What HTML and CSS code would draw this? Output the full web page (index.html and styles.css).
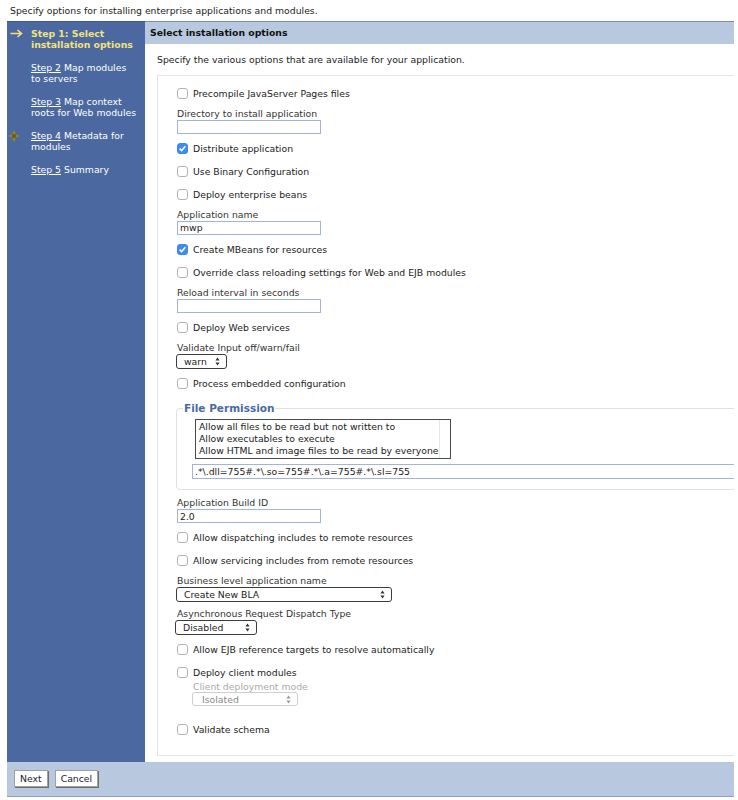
FILE: index.html
```html
<!DOCTYPE html>
<html lang="en">

<head>
    <meta charset="UTF-8">
    <meta name="viewport" content="width=device-width, initial-scale=1.0">
    <title>Install New Application</title>
    <link rel="stylesheet" href="styles.css">
</head>

<body>
    <p class="intro">Specify options for installing enterprise applications and modules.</p>

    <div class="wizard">
        <div class="wizard-body">
            <ul class="steps">
                <li class="step current">
                    <span class="step-icon">
                        <svg width="13" height="9" viewBox="0 0 13 9"><path d="M0.5 4.5H11M7.5 1L11.5 4.5L7.5 8" fill="none" stroke="#f3e27b" stroke-width="1.6"/></svg>
                    </span>
                    <span class="step-text">Step 1: Select<br>installation options</span>
                </li>
                <li class="step">
                    <span class="step-icon"></span>
                    <span class="step-text"><a href="#">Step 2</a> Map modules<br>to servers</span>
                </li>
                <li class="step">
                    <span class="step-icon"></span>
                    <span class="step-text"><a href="#">Step 3</a> Map context<br>roots for Web modules</span>
                </li>
                <li class="step">
                    <span class="step-icon required">
                        <svg width="12" height="12" viewBox="0 0 12 12"><path d="M6 0L7.8 4.2L12 6L7.8 7.8L6 12L4.2 7.8L0 6L4.2 4.2Z" fill="#9a8626"/><circle cx="6" cy="6" r="2.2" fill="#6e5f14"/></svg>
                    </span>
                    <span class="step-text"><a href="#">Step 4</a> Metadata for<br>modules</span>
                </li>
                <li class="step">
                    <span class="step-icon"></span>
                    <span class="step-text"><a href="#">Step 5</a> Summary</span>
                </li>
            </ul>

            <div class="main">
                <div class="main-title">Select installation options</div>
                <p class="main-desc">Specify the various options that are available for your application.</p>

                <div class="options">
                    <div class="opt"><span class="cb"></span>Precompile JavaServer Pages files</div>
                    <div class="field">
                        <label>Directory to install application</label>
                        <input class="text" type="text" value="">
                    </div>
                    <div class="opt"><span class="cb on"><svg viewBox="0 0 11 11"><path d="M2.6 5.6L4.6 7.6L8.4 3.2" fill="none" stroke="#fff" stroke-width="1.5"/></svg></span>Distribute application</div>
                    <div class="opt"><span class="cb"></span>Use Binary Configuration</div>
                    <div class="opt"><span class="cb"></span>Deploy enterprise beans</div>
                    <div class="field">
                        <label>Application name</label>
                        <input class="text" type="text" value="mwp">
                    </div>
                    <div class="opt"><span class="cb on"><svg viewBox="0 0 11 11"><path d="M2.6 5.6L4.6 7.6L8.4 3.2" fill="none" stroke="#fff" stroke-width="1.5"/></svg></span>Create MBeans for resources</div>
                    <div class="opt"><span class="cb"></span>Override class reloading settings for Web and EJB modules</div>
                    <div class="field">
                        <label>Reload interval in seconds</label>
                        <input class="text" type="text" value="">
                    </div>
                    <div class="opt"><span class="cb"></span>Deploy Web services</div>
                    <div class="field">
                        <label>Validate Input off/warn/fail</label>
                        <span class="select select-validate">warn<svg width="5" height="9" viewBox="0 0 5 9"><path d="M2.5 0.5L4.6 3.4H0.4ZM2.5 8.5L4.6 5.6H0.4Z" fill="#333"/></svg></span>
                    </div>
                    <div class="opt"><span class="cb"></span>Process embedded configuration</div>

                    <fieldset class="permission">
                        <legend>File Permission</legend>
                        <div class="listbox">
                            <ul>
                                <li>Allow all files to be read but not written to</li>
                                <li>Allow executables to execute</li>
                                <li>Allow HTML and image files to be read by everyone</li>
                            </ul>
                            <span class="track"></span>
                        </div>
                        <input class="text text-wide" type="text" value=".*\.dll=755#.*\.so=755#.*\.a=755#.*\.sl=755">
                    </fieldset>

                    <div class="field">
                        <label>Application Build ID</label>
                        <input class="text" type="text" value="2.0">
                    </div>
                    <div class="opt"><span class="cb"></span>Allow dispatching includes to remote resources</div>
                    <div class="opt"><span class="cb"></span>Allow servicing includes from remote resources</div>
                    <div class="field">
                        <label>Business level application name</label>
                        <span class="select select-bla">Create New BLA<svg width="5" height="9" viewBox="0 0 5 9"><path d="M2.5 0.5L4.6 3.4H0.4ZM2.5 8.5L4.6 5.6H0.4Z" fill="#333"/></svg></span>
                    </div>
                    <div class="field">
                        <label>Asynchronous Request Dispatch Type</label>
                        <span class="select select-async">Disabled<svg width="5" height="9" viewBox="0 0 5 9"><path d="M2.5 0.5L4.6 3.4H0.4ZM2.5 8.5L4.6 5.6H0.4Z" fill="#333"/></svg></span>
                    </div>
                    <div class="opt"><span class="cb"></span>Allow EJB reference targets to resolve automatically</div>
                    <div class="opt"><span class="cb"></span>Deploy client modules</div>
                    <div class="subfield">
                        <label>Client deployment mode</label>
                        <span class="select select-client disabled">Isolated<svg width="5" height="9" viewBox="0 0 5 9"><path d="M2.5 0.5L4.6 3.4H0.4ZM2.5 8.5L4.6 5.6H0.4Z" fill="#999"/></svg></span>
                    </div>
                    <div class="opt"><span class="cb"></span>Validate schema</div>
                </div>
            </div>
        </div>

        <div class="wizard-footer">
            <button type="button">Next</button>
            <button type="button">Cancel</button>
        </div>
    </div>
</body>

</html>
```

FILE: styles.css
```css
body {
    margin: 0;
    font-family: "DejaVu Sans", Verdana, sans-serif;
    font-size: 9.3px;
    color: #222;
    background-color: #fff;
}

.intro {
    margin: 0;
    padding: 4px 0 4px 10px;
    line-height: 13px;
}

.wizard {
    margin-left: 7px;
    width: 727px;
    overflow: hidden;
}

.wizard-body {
    display: grid;
    grid-template-columns: 138px 1fr;
}

/* left step list */
.steps {
    list-style: none;
    margin: 0;
    padding: 5.5px 0 0;
    background-color: #4b69a0;
    border-top: 1px solid #3f5b8e;
}

.step {
    display: grid;
    grid-template-columns: 24px 1fr;
    line-height: 11px;
    margin-bottom: 12px;
    color: #fff;
}

.step-icon {
    padding-left: 3px;
}

.step-icon svg {
    display: block;
    margin-top: 1px;
}

.step-icon.required {
    padding-left: 1px;
}

.step-icon.required svg {
    margin-top: 0;
}

.step.current .step-text {
    color: #f3e27b;
    font-weight: bold;
}

.step a {
    color: #fff;
}

/* main panel */
.main {
    padding-bottom: 6px;
    min-width: 0;
}

.main-title {
    background-color: #b8c8df;
    border-top: 1px solid #7b8db6;
    padding: 0 5px;
    line-height: 22px;
    font-weight: bold;
    color: #111;
}

.main-desc {
    margin: 0;
    padding: 8.5px 12px 9.5px;
    line-height: 13px;
}

.options {
    margin: 0 -60px 0 12px;
    border: 1px solid #e4e4e4;
    padding: 5.5px 19px 14.5px;
}

.opt {
    display: flex;
    align-items: center;
    gap: 5px;
    height: 23px;
}

.cb {
    width: 11px;
    height: 11px;
    box-sizing: border-box;
    border: 1px solid #b3b3b3;
    border-radius: 3px;
    background-color: #fff;
    flex: none;
}

.cb.on {
    background-color: #3c8cf5;
    border-color: #3a87ee;
}

.cb svg {
    display: block;
    width: 11px;
    height: 11px;
    margin: -1px;
}

.field {
    padding: 3px 0;
}

.field label,
.subfield label {
    display: block;
    line-height: 12px;
    color: #333;
}

.text {
    display: block;
    box-sizing: border-box;
    width: 144px;
    height: 14px;
    margin: 0;
    padding: 0 2px;
    border: 1px solid #a2b5d2;
    font: inherit;
    line-height: 12px;
    color: #222;
}

.select {
    display: flex;
    align-items: center;
    justify-content: space-between;
    box-sizing: border-box;
    height: 15px;
    margin-left: -1px;
    padding: 0 6px 0 7px;
    border: 1px solid #3c3c3c;
    border-radius: 3px;
    background-color: #fff;
}

.select-validate {
    width: 51px;
}

.select-bla {
    width: 216px;
}

.select-async {
    width: 82px;
    margin-left: -2px;
}

.subfield {
    margin: -3px 0 11.5px 16px;
}

.subfield label {
    line-height: 11px;
    color: #aaa;
}

.select-client {
    width: 106px;
    height: 14px;
    padding-left: 9px;
}

.select.disabled {
    border-color: #cfcfcf;
    color: #888;
}

/* file permission group */
.permission {
    margin: 7.5px 0 4px -1px;
    padding: 0 0 10px 6px;
    border: 1px solid #e0e0e0;
    border-radius: 4px;
    min-width: 0;
}

.permission legend {
    padding: 0 1px;
    line-height: 12px;
    font-size: 10.5px;
    font-weight: bold;
    color: #4b6aa2;
}

.listbox {
    display: flex;
    box-sizing: border-box;
    width: 256px;
    height: 40px;
    margin: 5px 0 0 12px;
    border: 1px solid #4a4a4a;
}

.listbox ul {
    flex: 1;
    list-style: none;
    margin: 0;
    padding: 1px 0 1px 3px;
    line-height: 12px;
    white-space: nowrap;
    overflow: hidden;
}

.listbox .track {
    width: 10px;
    flex: none;
    border-left: 1px solid #e6e6e6;
}

.text-wide {
    width: 560px;
    height: 15px;
    margin: 5px 0 0 9px;
}

/* footer */
.wizard-footer {
    display: flex;
    gap: 7px;
    padding: 8px 7px 9px;
    background-color: #b8c8df;
    border-bottom: 1px solid #8d9fc3;
}

.wizard-footer button {
    height: 17px;
    padding: 0 5px;
    font: inherit;
    color: #222;
    background-color: #fff;
    border: 1px solid #a0a0a0;
    border-radius: 0;
    box-shadow: 1px 1px 0 #6f6f6f;
}
```
